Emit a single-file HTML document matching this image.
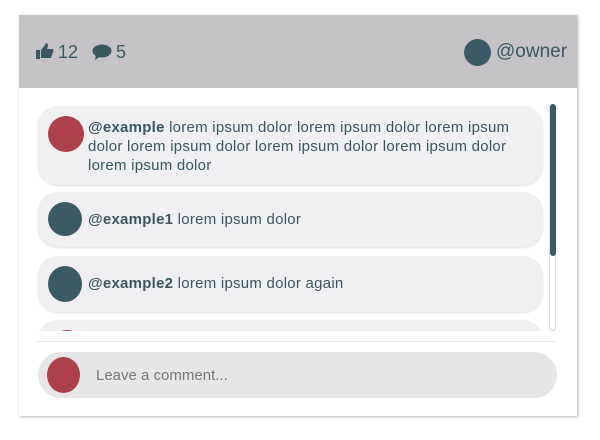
<!DOCTYPE html>
<html><head><style>
*{box-sizing:border-box;margin:0;padding:0}
body{width:600px;height:440px;background:#fff;font-family:"Liberation Sans",sans-serif;color:#3a5862;position:relative;overflow:hidden}
.card{position:absolute;left:19px;top:15px;width:558px;height:401px;background:#fff;box-shadow:1px 1px 3px rgba(0,0,0,.3)}
.head{position:absolute;left:0;top:0;width:558px;height:73px;background:#c5c3c5}
.av{position:absolute;border-radius:50%}
.red{background:#ae404b}.teal{background:#3b5a65}
.b{position:absolute;left:19px;width:505px;background:#f0eff1;border-radius:20px;box-shadow:0 1px 2px rgba(0,0,0,.12)}
.t{position:absolute;left:50px;font-size:15px;line-height:19px;width:450px;letter-spacing:0.25px}
.t b{font-weight:bold}
</style></head><body>
<div class="card">
 <div class="head">
  <svg style="position:absolute;left:17px;top:28px" width="18" height="16" viewBox="0 0 18 16"><rect x="0" y="7" width="4" height="9" fill="#3a5862"/><path d="M5 7 L9 2 L10 0 Q12 0 12 3 L11 6 L17 6 Q18 7 17 9 L15 15 L5 15Z" fill="#3a5862"/></svg>
  <div style="position:absolute;left:39px;top:27px;font-size:18px">12</div>
  <svg style="position:absolute;left:73px;top:29px" width="20" height="17" viewBox="0 0 20 17"><ellipse cx="10" cy="7" rx="9.5" ry="6.5" fill="#3a5862"/><path d="M4 11 L3 16 L9 12Z" fill="#3a5862"/></svg>
  <div style="position:absolute;left:97px;top:27px;font-size:18px">5</div>
  <div class="av teal" style="left:445px;top:24px;width:27px;height:27px"></div>
  <div style="position:absolute;left:477px;top:26px;font-size:19px">@owner</div>
 </div>
 <div style="position:absolute;left:0;top:89px;width:558px;height:227px;overflow:hidden">
  <div class="b" style="top:2px;height:79px"><div class="av red" style="left:10px;top:10px;width:36px;height:36px"></div><div class="t" style="top:12px"><b>@example</b> lorem ipsum dolor lorem ipsum dolor lorem ipsum dolor lorem ipsum dolor lorem ipsum dolor lorem ipsum dolor lorem ipsum dolor</div></div>
  <div class="b" style="top:88px;height:55px"><div class="av teal" style="left:10px;top:10px;width:34px;height:34px"></div><div class="t" style="top:18px"><b>@example1</b> lorem ipsum dolor</div></div>
  <div class="b" style="top:152px;height:56px"><div class="av teal" style="left:10px;top:10px;width:34px;height:36px"></div><div class="t" style="top:18px"><b>@example2</b> lorem ipsum dolor again</div></div>
  <div class="b" style="top:216px;height:40px"><div class="av red" style="left:12px;top:10px;width:34px;height:36px"></div></div>
 </div>
 <div style="position:absolute;left:530px;top:89px;width:7px;height:227px;border:1px solid #ddd;border-radius:4px"></div>
 <div style="position:absolute;left:531px;top:89px;width:6px;height:152px;background:#3b5a65;border-radius:3px"></div>
 <div style="position:absolute;left:17px;top:326px;width:520px;height:1px;background:#eceaec"></div>
 <div style="position:absolute;left:19px;top:337px;width:519px;height:46px;background:#e6e5e7;border-radius:23px">
  <div class="av red" style="left:9px;top:5px;width:33px;height:36px"></div>
  <div style="position:absolute;left:58px;top:15px;font-size:15px;color:#777">Leave a comment...</div>
 </div>
</div>
</body></html>
